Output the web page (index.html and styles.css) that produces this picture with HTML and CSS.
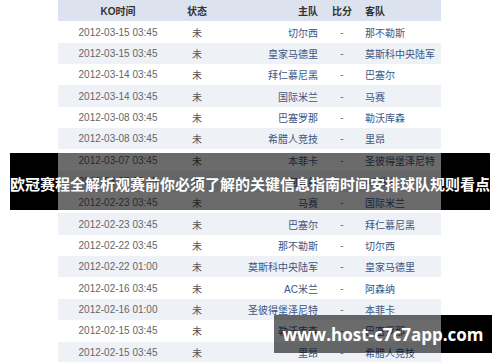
FILE: index.html
```html
<!DOCTYPE html>
<html lang="zh">
<head>
<meta charset="utf-8">
<title>欧冠赛程</title>
<link rel="stylesheet" href="styles.css">
</head>
<body>
<div class="page">
  <div class="table">
    <div class="row head"><span class="c1">KO时间</span><span class="c2">状态</span><span class="c3">主队</span><span class="c4">比分</span><span class="c5">客队</span></div>
    <div class="row"><span class="c1">2012-03-15 03:45</span><span class="c2">未</span><span class="c3 team">切尔西</span><span class="c4">-</span><span class="c5 team">那不勒斯</span></div>
    <div class="row alt"><span class="c1">2012-03-15 03:45</span><span class="c2">未</span><span class="c3 team">皇家马德里</span><span class="c4">-</span><span class="c5 team">莫斯科中央陆军</span></div>
    <div class="row"><span class="c1">2012-03-14 03:45</span><span class="c2">未</span><span class="c3 team">拜仁慕尼黑</span><span class="c4">-</span><span class="c5 team">巴塞尔</span></div>
    <div class="row alt"><span class="c1">2012-03-14 03:45</span><span class="c2">未</span><span class="c3 team">国际米兰</span><span class="c4">-</span><span class="c5 team">马赛</span></div>
    <div class="row"><span class="c1">2012-03-08 03:45</span><span class="c2">未</span><span class="c3 team">巴塞罗那</span><span class="c4">-</span><span class="c5 team">勒沃库森</span></div>
    <div class="row alt"><span class="c1">2012-03-08 03:45</span><span class="c2">未</span><span class="c3 team">希腊人竞技</span><span class="c4">-</span><span class="c5 team">里昂</span></div>
    <div class="row"><span class="c1">2012-03-07 03:45</span><span class="c2">未</span><span class="c3 team">本菲卡</span><span class="c4">-</span><span class="c5 team">圣彼得堡泽尼特</span></div>
    <div class="row alt"><span class="c1">2012-03-07 03:45</span><span class="c2">未</span><span class="c3 team">阿森纳</span><span class="c4">-</span><span class="c5 team">AC米兰</span></div>
    <div class="row"><span class="c1">2012-02-23 03:45</span><span class="c2">未</span><span class="c3 team">马赛</span><span class="c4">-</span><span class="c5 team">国际米兰</span></div>
    <div class="row alt"><span class="c1">2012-02-23 03:45</span><span class="c2">未</span><span class="c3 team">巴塞尔</span><span class="c4">-</span><span class="c5 team">拜仁慕尼黑</span></div>
    <div class="row"><span class="c1">2012-02-22 03:45</span><span class="c2">未</span><span class="c3 team">那不勒斯</span><span class="c4">-</span><span class="c5 team">切尔西</span></div>
    <div class="row alt"><span class="c1">2012-02-22 01:00</span><span class="c2">未</span><span class="c3 team">莫斯科中央陆军</span><span class="c4">-</span><span class="c5 team">皇家马德里</span></div>
    <div class="row"><span class="c1">2012-02-16 03:45</span><span class="c2">未</span><span class="c3 team">AC米兰</span><span class="c4">-</span><span class="c5 team">阿森纳</span></div>
    <div class="row alt"><span class="c1">2012-02-16 01:00</span><span class="c2">未</span><span class="c3 team">圣彼得堡泽尼特</span><span class="c4">-</span><span class="c5 team">本菲卡</span></div>
    <div class="row"><span class="c1">2012-02-15 03:45</span><span class="c2">未</span><span class="c3 team">勒沃库森</span><span class="c4">-</span><span class="c5 team">巴塞罗那</span></div>
    <div class="row alt"><span class="c1">2012-02-15 03:45</span><span class="c2">未</span><span class="c3 team">里昂</span><span class="c4">-</span><span class="c5 team">希腊人竞技</span></div>
  </div>
  <div class="title-band"><h1 class="title">欧冠赛程全解析观赛前你必须了解的关键信息指南时间安排球队规则看点</h1></div>
  <div class="watermark">www.host-c7c7app.com</div>
</div>
</body>
</html>
```

FILE: styles.css
```css
html, body {
  margin: 0;
  padding: 0;
  background: #ffffff;
}
.page {
  position: relative;
  width: 500px;
  height: 362px;
  overflow: hidden;
  font-family: "Liberation Sans", "Noto Sans CJK SC", sans-serif;
}
.table {
  margin-left: 58px;
  width: 383px;
  display: flex;
  flex-direction: column;
}
.row {
  display: grid;
  grid-template-columns: 120px 38px 109px 34px 82px;
  height: 21.35px;
  align-items: center;
  font-size: 10px;
  color: #666666;
  background: #ffffff;
}
.row.alt {
  background: #eef1f6;
}
.row.head {
  background: #dde3ee;
  color: #333333;
  font-weight: bold;
}
.c1, .c2, .c4 {
  text-align: center;
}
.c2 { color: #555555; }
.c3 {
  text-align: right;
  padding-right: 7px;
}
.c5 {
  text-align: left;
  padding-left: 6px;
}
.team {
  color: #3b5584;
}
.row.head .c3, .row.head .c5, .row.head .c2 { color: #333333; }
.title-band {
  position: absolute;
  left: 10px;
  top: 153px;
  width: 480px;
  height: 57px;
  display: flex;
  align-items: center;
  justify-content: center;
  background: linear-gradient(to right, #000 0, #000 48px, rgba(0,0,0,0.58) 48px, rgba(0,0,0,0.58) 431px, #000 431px, #000 100%);
}
.title {
  margin: 4px 0 0 0;
  font-family: "Noto Sans CJK SC", sans-serif;
  font-size: 15px;
  font-weight: bold;
  color: #ffffff;
  white-space: nowrap;
  line-height: 1;
}
.watermark {
  position: absolute;
  left: 274px;
  top: 315px;
  width: 218px;
  height: 38px;
  display: flex;
  align-items: center;
  justify-content: center;
  font-family: "Open Sans", sans-serif;
  font-weight: bold;
  font-size: 17px;
  color: #ffffff;
  background: linear-gradient(to right, rgba(0,0,0,0.58) 0, rgba(0,0,0,0.58) 167px, #000 167px, #000 100%);
}
```
